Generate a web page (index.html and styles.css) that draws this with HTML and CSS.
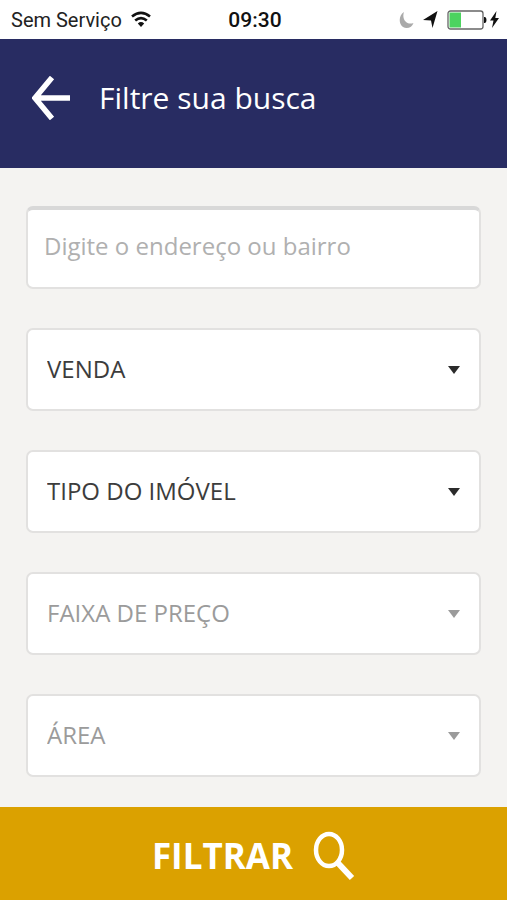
FILE: index.html
```html
<!DOCTYPE html>
<html lang="pt-BR">
<head>
<meta charset="utf-8">
<meta name="viewport" content="width=device-width, initial-scale=1">
<title>Filtre sua busca</title>
<link rel="stylesheet" href="styles.css">
</head>
<body>
<div class="status">
  <div class="carrier">
    <span>Sem Serviço</span>
    <svg width="20" height="17" viewBox="0 0 20 17" aria-hidden="true">
      <g fill="none" stroke="#111" stroke-width="2.6">
        <path d="M1 5.6Q10-1.8 19 5.6"/>
        <path d="M4.2 9.6Q10 4.6 15.8 9.6"/>
      </g>
      <path d="M6.8 12.400Q10 9.600 13.200 12.400L10 16z" fill="#111"/>
    </svg>
  </div>
  <time class="clock">09:30</time>
  <div class="indicators">
    <svg width="15" height="18" viewBox="0 0 15 18" aria-hidden="true"><path d="M5 1C-1.5 4.5-.5 17 7.5 17C11 17 13.5 15 14.500 12C7.500 14.500 2.500 8 5 1z" fill="#aaa"/></svg>
    <svg width="15" height="17" viewBox="0 0 15 17" aria-hidden="true"><path d="M14.500 0L9.500 17L8 9.500L0 9z" fill="#111"/></svg>
    <div class="power">
      <svg width="40" height="20" viewBox="0 0 40 20" aria-hidden="true">
        <rect x="1" y="1" width="35" height="18" rx="2.500" fill="#fff" stroke="#666" stroke-width="1.300"/>
        <rect x="2.500" y="2.500" width="11.500" height="15" fill="#4cd35f"/>
        <path d="M37 7h1.200q1.300 1 1.300 3t-1.300 3H37z" fill="#111"/>
      </svg>
      <svg width="9" height="17" viewBox="0 0 9 17" aria-hidden="true"><path d="M6.500 0L0 9.500h3.500L2 17L9 7H5.300z" fill="#111"/></svg>
    </div>
  </div>
</div>
<header class="header">
  <button class="back" type="button" aria-label="Voltar">
    <svg width="38" height="44" viewBox="0 0 38 44" aria-hidden="true"><path d="M20 1.500L3 22L20 42.500M3 22H38" fill="none" stroke="#fff" stroke-width="5.500"/></svg>
  </button>
  <h1>Filtre sua busca</h1>
</header>
<form class="form">
  <div class="fields">
    <input class="field address" type="text" placeholder="Digite o endereço ou bairro" aria-label="Endereço ou bairro">
    <div class="picker">
      <select class="field" aria-label="Negócio"><option>VENDA</option></select>
      <svg class="caret" width="14" height="8" viewBox="0 0 14 8" aria-hidden="true"><path d="M1 0h12L7 8z"/></svg>
    </div>
    <div class="picker">
      <select class="field" aria-label="Tipo do imóvel"><option>TIPO DO IMÓVEL</option></select>
      <svg class="caret" width="14" height="8" viewBox="0 0 14 8" aria-hidden="true"><path d="M1 0h12L7 8z"/></svg>
    </div>
    <div class="picker muted">
      <select class="field" aria-label="Faixa de preço" disabled><option>FAIXA DE PREÇO</option></select>
      <svg class="caret" width="14" height="8" viewBox="0 0 14 8" aria-hidden="true"><path d="M1 0h12L7 8z"/></svg>
    </div>
    <div class="picker muted">
      <select class="field" aria-label="Área" disabled><option>ÁREA</option></select>
      <svg class="caret" width="14" height="8" viewBox="0 0 14 8" aria-hidden="true"><path d="M1 0h12L7 8z"/></svg>
    </div>
  </div>
  <button class="submit" type="submit">
    <span>FILTRAR</span>
    <svg width="42" height="50" viewBox="0 0 42 50" aria-hidden="true">
      <ellipse cx="16" cy="19" rx="13" ry="16" fill="none" stroke="#fff" stroke-width="4.500"/>
      <path d="M24.500 31.500L39 47" stroke="#fff" stroke-width="6"/>
    </svg>
  </button>
</form>
</body>
</html>
```

FILE: styles.css
```css
* {
  box-sizing: border-box;
}

body {
  margin: 0;
  min-height: 100vh;
  display: flex;
  flex-direction: column;
  background: #f4f3f1;
  font-family: "Open Sans", "Noto Sans", sans-serif;
}

svg {
  display: block;
  flex: none;
}

.status {
  display: grid;
  grid-template-columns: 1fr auto 1fr;
  align-items: center;
  height: 39px;
  padding: 0 8px 0 11px;
  background: #fff;
  color: #222;
  font-family: Roboto, "Liberation Sans", sans-serif;
  font-size: 20px;
}

.carrier,
.indicators,
.power {
  display: flex;
  align-items: center;
}

.carrier {
  gap: 9px;
}

.indicators {
  justify-content: flex-end;
  gap: 9px;
}

.power {
  gap: 3px;
}

.clock {
  font-size: 21px;
  font-weight: 500;
  color: #111;
}

.header {
  display: flex;
  align-items: center;
  gap: 29px;
  height: 129px;
  padding: 0 32px 12px;
  background: #282c62;
  color: #fff;
}

.back {
  padding: 0;
  border: 0;
  background: none;
}

h1 {
  margin: 0;
  font-size: 30px;
  line-height: 44px;
  font-weight: 400;
}

.form {
  flex: 1;
  display: flex;
  flex-direction: column;
}

.fields {
  flex: 1;
  display: flex;
  flex-direction: column;
  gap: 39px;
  padding: 38px 26px 30px;
}

.field {
  display: block;
  width: 100%;
  height: 83px;
  margin: 0;
  padding: 0 48px 2px 19px;
  border: 2px solid #e2e1e0;
  border-radius: 7px;
  background: #fff;
  color: #3c3c3c;
  font-family: inherit;
  font-size: 24px;
  appearance: none;
}

.address {
  padding: 0 16px 6px;
  border-top: 4px solid #d8d8d8;
}

.address::placeholder {
  color: #b0b0b0;
  opacity: 1;
}

.picker {
  position: relative;
  color: #2b2b2b;
}

.caret {
  position: absolute;
  top: 38px;
  right: 20px;
  fill: currentColor;
  pointer-events: none;
}

.muted,
.muted .field {
  color: #9b9b9b;
  opacity: 1;
}

.submit {
  display: flex;
  justify-content: center;
  align-items: center;
  gap: 20px;
  width: 100%;
  height: 93px;
  padding: 4px 0 0;
  border: 0;
  background: #dba100;
  color: #fff;
  font-family: inherit;
  font-size: 35px;
  font-weight: 700;
}
```
